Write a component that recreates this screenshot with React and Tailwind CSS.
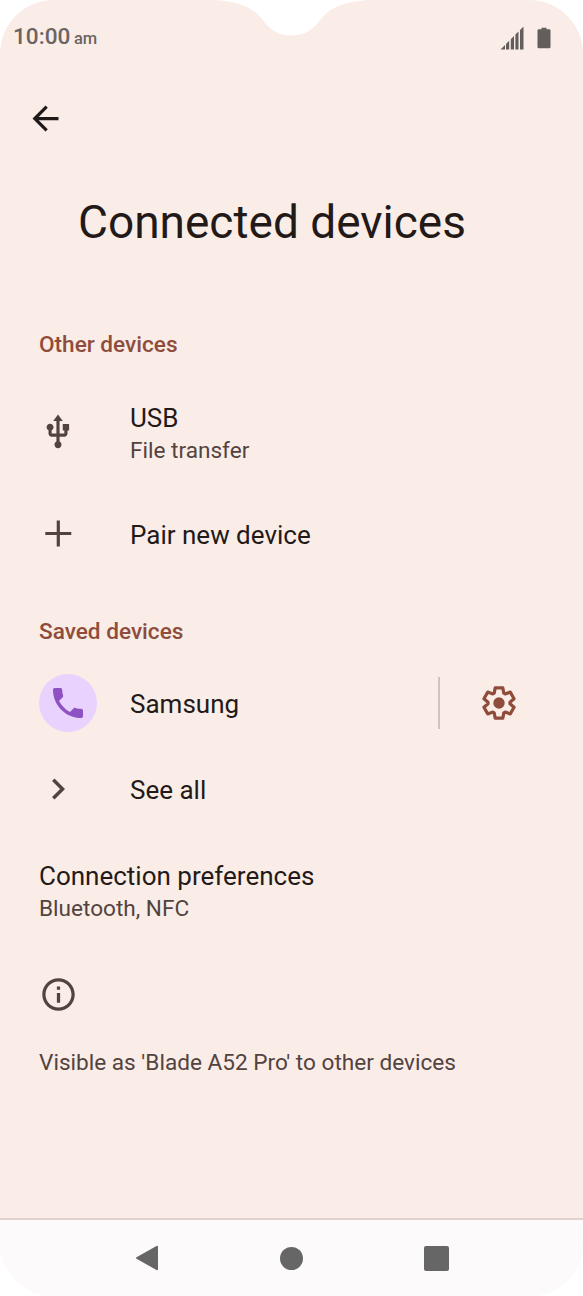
import React from "react";

const navItemStyle = "flex items-center justify-center";

function SectionTitle({ children }) {
  return (
    <h2 className="h-8 leading-8 pl-[39px] text-[22.6px] font-medium text-[#8f4c3a]">
      {children}
    </h2>
  );
}

function Row({ icon, title, subtitle, action, className }) {
  return (
    <div className={`flex items-center ${className}`}>
      <div className="w-[130px] shrink-0">{icon}</div>
      <div className="flex-1">
        <p className="text-[26px] leading-[34px] text-[#231a18]">{title}</p>
        {subtitle && (
          <p className="text-[22.6px] leading-8 text-[#53433f]">{subtitle}</p>
        )}
      </div>
      {action}
    </div>
  );
}

function UsbIcon() {
  return (
    <svg
      className="ml-[39px] -mt-1 w-[38px] h-[38px]"
      viewBox="0 0 24 24"
      fill="#53433f"
    >
      <path d="M15 7v4h1v2h-3V5h2l-3-4-3 4h2v8H8v-2.07c.7-.37 1.2-1.08 1.2-1.93 0-1.21-.99-2.2-2.2-2.2-1.21 0-2.2.99-2.2 2.2 0 .85.5 1.56 1.2 1.93V13c0 1.11.89 2 2 2h3v3.05c-.71.37-1.2 1.1-1.2 1.95 0 1.22.99 2.2 2.2 2.2 1.21 0 2.2-.98 2.2-2.2 0-.85-.49-1.58-1.2-1.95V15h3c1.11 0 2-.89 2-2v-2h1V7h-4z" />
    </svg>
  );
}

function PlusIcon() {
  return (
    <svg className="ml-[45px] -mt-0.5 w-[27px] h-[27px]" viewBox="0 0 27 27">
      <path d="M13.3 0.5v26M0.3 13.5h26" stroke="#53433f" strokeWidth="3.2" />
    </svg>
  );
}

function PhoneIcon() {
  return (
    <div className="ml-[39px] -mt-[3px] w-[58px] h-[58px] rounded-full bg-[#e9d2fd] flex items-center justify-center">
      <svg className="w-10 h-10" viewBox="0 0 24 24" fill="#8e51c2">
        <path d="M6.62 10.79c1.44 2.83 3.76 5.14 6.59 6.59l2.2-2.2c.27-.27.67-.36 1.02-.24 1.12.37 2.33.57 3.57.57.55 0 1 .45 1 1V20c0 .55-.45 1-1 1-9.39 0-17-7.61-17-17 0-.55.45-1 1-1h3.5c.55 0 1 .45 1 1 0 1.25.2 2.45.57 3.57.11.35.03.74-.25 1.02l-2.2 2.2z" />
      </svg>
    </div>
  );
}

function ChevronIcon() {
  return (
    <svg
      className="ml-[37px] -mt-[3px] w-[42px] h-[42px]"
      viewBox="0 0 24 24"
      fill="#53433f"
    >
      <path d="M10 6L8.59 7.41 13.17 12l-4.58 4.59L10 18l6-6z" />
    </svg>
  );
}

function GearIcon() {
  return (
    <svg className="w-9 h-9" viewBox="-18 -18 36 36">
      <path
        d="M-3.8-15.2H3.8L4.8-9.9 6.17-9.11 11.26-10.89 15.06-4.31 10.97-.79V.79L15.06 4.31 11.26 10.89 6.17 9.11 4.8 9.9 3.8 15.2H-3.8L-4.8 9.9-6.17 9.11-11.26 10.89-15.06 4.31-10.97.79V-.79L-15.06-4.31-11.26-10.89-6.17-9.11-4.8-9.9Z"
        fill="none"
        stroke="#8f4c3a"
        strokeWidth="3.2"
        strokeLinejoin="round"
      />
      <circle r="5.7" fill="#8f4c3a" />
    </svg>
  );
}

export default function ConnectedDevices() {
  return (
    <div className="relative w-[583px] h-[1296px] flex flex-col overflow-hidden rounded-[54px] bg-[#faede8] font-['Roboto',sans-serif]">
      {/* Camera notch */}
      <svg
        className="absolute left-[211px] top-0 w-[161px] h-9"
        viewBox="0 0 161 36"
        fill="#ffffff"
      >
        <path d="M0 0C20 0 42 6 51 19C58 29 67 35.5 80.5 35.5S103 29 110 19C119 6 141 0 161 0Z" />
      </svg>

      {/* Status bar */}
      <header className="flex items-center justify-between h-[76px] pl-[13px] pr-8">
        <p className="text-[22.6px] leading-8 text-[#6b6462] font-medium">
          10:00 <span className="-ml-0.5 text-[16.5px]">am</span>
        </p>
        <div className="flex items-center gap-[13px]">
          <svg className="w-6 h-6" viewBox="0 0 24 24" fill="#635d5b">
            <path d="M0.5 23.5L5 19V23.5ZM6 18L9.2 14.8V23.5H6ZM10.8 13.2L14 10V23.5H10.8ZM15.4 8.6L18.5 5.5V23.5H15.4ZM20 4L23.5 0.5V23.5H20Z" />
          </svg>
          <svg className="w-[14px] h-[22px]" viewBox="0 0 14 22" fill="#635d5b">
            <path d="M4.5 0.7h5v1.6h2.7q1.3 0 1.3 1.3v16.4q0 1.3-1.3 1.3H1.8q-1.3 0-1.3-1.3V3.6q0-1.3 1.3-1.3h2.7z" />
          </svg>
        </div>
      </header>

      {/* Back button */}
      <button type="button" aria-label="Back" className="h-[84px] pl-[26px]">
        <svg className="w-[39px] h-[39px]" viewBox="0 0 24 24" fill="#1f1a19">
          <path d="M20 11H7.83l5.59-5.59L12 4l-8 8 8 8 1.41-1.41L7.83 13H20v-2z" />
        </svg>
      </button>

      <h1 className="h-[125px] leading-[125px] pl-[78px] text-[46px] text-[#231a18]">
        Connected devices
      </h1>

      {/* Device list */}
      <main className="flex-1 pt-11">
        <SectionTitle>Other devices</SectionTitle>
        <Row
          className="h-[146px]"
          icon={<UsbIcon />}
          title="USB"
          subtitle="File transfer"
        />
        <Row
          className="h-[55px]"
          icon={<PlusIcon />}
          title="Pair new device"
        />

        <div className="pt-[54px]">
          <SectionTitle>Saved devices</SectionTitle>
        </div>
        <Row
          className="mt-[26px] h-[60px]"
          icon={<PhoneIcon />}
          title="Samsung"
          action={
            <div className="-mt-0.5 flex items-center h-[52px] pl-[41px] pr-[66px] border-l-2 border-[#d3c3c0]">
              <GearIcon />
            </div>
          }
        />
        <Row
          className="mt-[35px] h-[42px]"
          icon={<ChevronIcon />}
          title="See all"
        />

        <div className="mt-12 pl-[39px]">
          <p className="text-[26px] leading-[34px] text-[#231a18]">
            Connection preferences
          </p>
          <p className="text-[22.6px] leading-8 text-[#53433f]">
            Bluetooth, NFC
          </p>
          <svg
            className="mt-[50px] w-[39px] h-[39px]"
            viewBox="0 0 24 24"
            fill="#53433f"
          >
            <path d="M11 7h2v2h-2zm0 4h2v6h-2zm1-9C6.48 2 2 6.48 2 12s4.48 10 10 10 10-4.48 10-10S17.52 2 12 2zm0 18c-4.41 0-8-3.59-8-8s3.59-8 8-8 8 3.59 8 8-3.59 8-8 8z" />
          </svg>
          <p className="mt-[33px] text-[22.6px] leading-8 text-[#53433f]">
            Visible as 'Blade A52 Pro' to other devices
          </p>
        </div>
      </main>

      {/* Navigation bar */}
      <nav className="flex items-center justify-center gap-[121px] h-[78px] border-t-2 border-[#e3d2d2] bg-[#fcfafb]">
        <div className={navItemStyle}>
          <svg className="w-6 h-[26px]" viewBox="0 0 24 26">
            <path
              d="M22 1.8V24.2L2 13Z"
              fill="#666666"
              stroke="#666666"
              strokeWidth="2"
              strokeLinejoin="round"
            />
          </svg>
        </div>
        <div className={navItemStyle}>
          <div className="w-[23px] h-[23px] rounded-full bg-[#666666]" />
        </div>
        <div className={navItemStyle}>
          <div className="w-[25px] h-[25px] rounded-xs bg-[#666666]" />
        </div>
      </nav>
    </div>
  );
}
